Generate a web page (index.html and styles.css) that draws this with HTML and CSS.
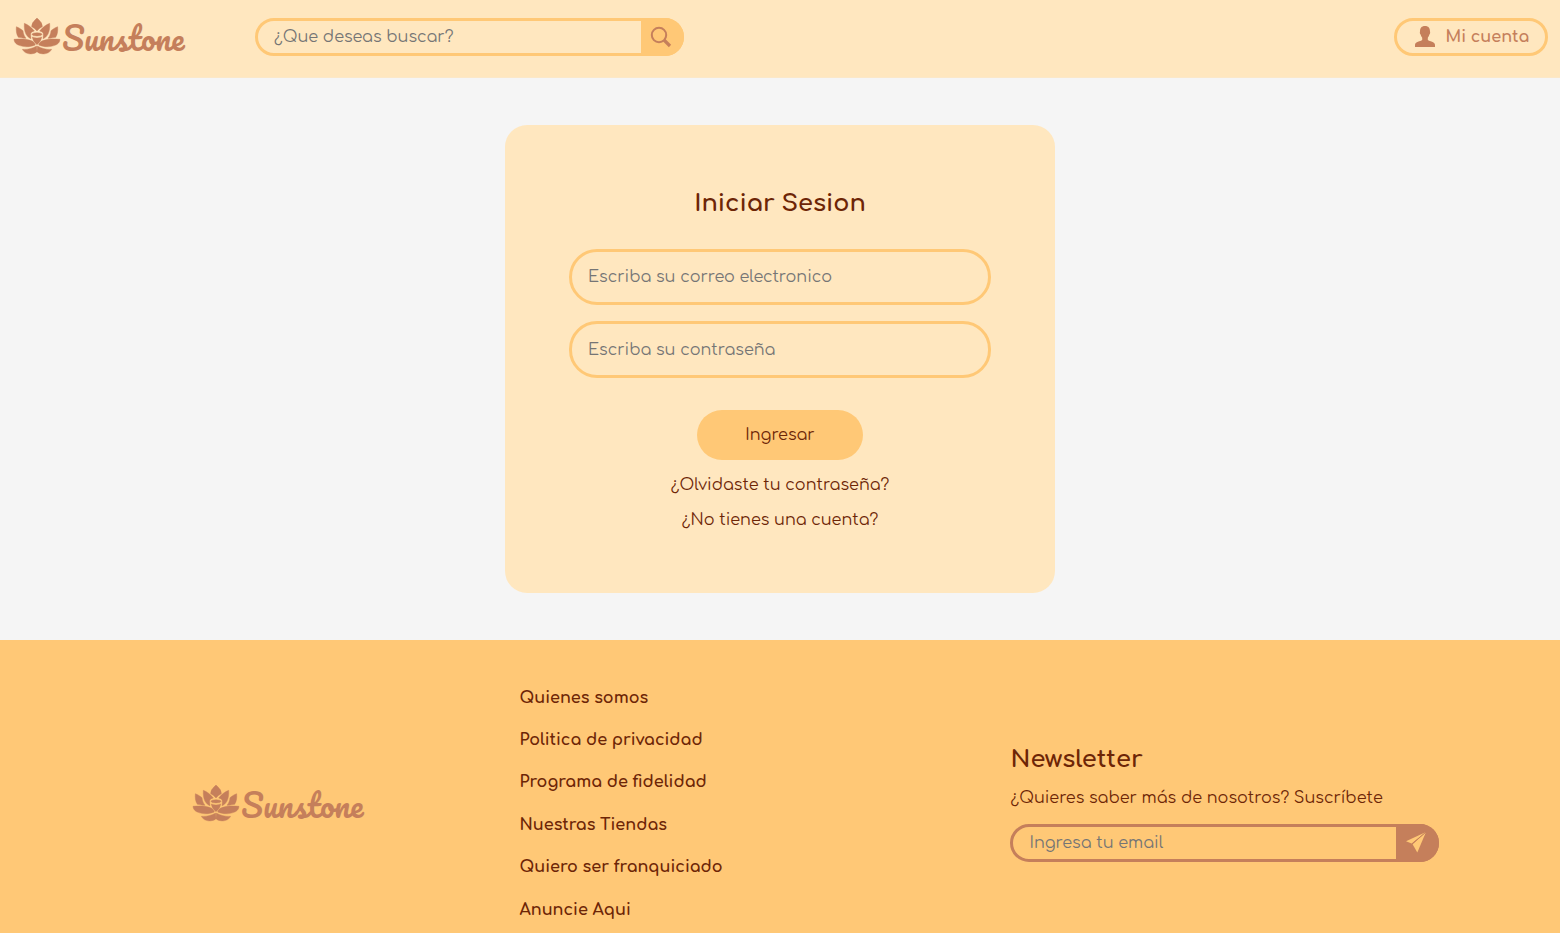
FILE: index.html
```html
<!DOCTYPE html>
<html lang="es">
<head>
<meta charset="utf-8">
<title>Sunstone</title>
<link rel="stylesheet" href="styles.css">
</head>
<body>
<svg class="defs" width="0" height="0">
  <symbol id="logo" viewBox="0 0 174 42" overflow="visible">
    <g class="lotus" transform="translate(-14 -15) scale(.33333)">
      <path d="M111 54Q94 68 95 80Q104 84 111 93Q118 84 127 80Q128 68 111 54Z"/>
      <g id="petals">
        <path d="M73 70C84 74 94 82 103 93C94 95 91 99 92 106L93 116C81 112 71 98 73 70Z"/>
        <path d="M49 80C57 83 63 87 69 92C70 102 73 108 78 115C68 115 61 113 55 112C49 103 48 92 49 80Z"/>
        <path d="M42 118C60 116 80 117 91 121C100 124 105 129 106 135C95 140 80 142 68 139C52 136 43 130 42 118Z"/>
        <path d="M67 148C84 149 97 145 110 138L111 155C102 164 76 166 67 148Z"/>
      </g>
      <use href="#petals" transform="translate(222 0) scale(-1 1)"/>
      <ellipse cx="111" cy="103" rx="15" ry="5"/>
      <path d="M97 111Q111 117 125 111Q124 124 111 134Q98 124 97 111Z"/>
    </g>
    <text class="logo-text" x="48" y="35.500">Sunstone</text>
  </symbol>
</svg>
<header class="header">
  <svg class="logo"><use href="#logo"/></svg>
  <form class="search">
    <input class="search-input" type="text" placeholder="¿Que deseas buscar?">
    <button class="search-btn" type="button" aria-label="Buscar">
      <svg width="22" height="22" viewBox="0 0 22 22" fill="none" stroke="#c57f5b"><circle cx="9" cy="9" r="7.200" stroke-width="2"/><path d="M14 14L20 20" stroke-width="3.200"/></svg>
    </button>
  </form>
  <a class="account"><svg width="20" height="21" viewBox="0 0 20 21" fill="#c57f5b"><path d="M10 0C6.500 0 5 2.200 5 5.500C4.600 6.500 5 8 5.600 8.600C6 10.300 6.700 11 7.200 11.700V14C5.500 15.500 0 15.500 0 19V21H20V19C20 15.500 14.500 15.500 12.800 14V11.700C13.300 11 14 10.300 14.400 8.600C15 8 15.400 6.500 15 5.500C15 2.200 13.500 0 10 0Z"/></svg><span>Mi cuenta</span></a>
</header>
<main class="main">
  <form class="card">
    <h1 class="title">Iniciar Sesion</h1>
    <input class="field" type="email" placeholder="Escriba su correo electronico">
    <input class="field" type="password" placeholder="Escriba su contraseña">
    <button class="submit" type="button">Ingresar</button>
    <a class="link">¿Olvidaste tu contraseña?</a>
    <a class="link">¿No tienes una cuenta?</a>
  </form>
</main>
<footer class="footer">
  <div class="footer-logo"><svg class="logo"><use href="#logo"/></svg></div>
  <nav class="footer-nav">
    <a>Quienes somos</a>
    <a>Politica de privacidad</a>
    <a>Programa de fidelidad</a>
    <a>Nuestras Tiendas</a>
    <a>Quiero ser franquiciado</a>
    <a>Anuncie Aqui</a>
  </nav>
  <section class="newsletter">
    <h2 class="news-title">Newsletter</h2>
    <p class="news-text">¿Quieres saber más de nosotros? Suscríbete</p>
    <form class="search news-form">
      <input class="search-input" type="text" placeholder="Ingresa tu email">
      <button class="search-btn" type="button" aria-label="Enviar">
        <svg width="20" height="21" viewBox="0 0 20 21" fill="#ffc876"><path d="M20 0L0 9.300L5.600 11.600Z"/><path d="M20 0L6.600 12.300L11.300 20.500Z"/><path d="M20 0L6 12" stroke="#c57f5b" stroke-width="1"/></svg>
      </button>
    </form>
  </section>
</footer>
</body>
</html>
```
FILE: styles.css
```css
* { box-sizing: border-box; }
body {
  margin: 0;
  height: 100vh;
  overflow: hidden;
  background: #f5f5f5;
  color: #6d2506;
  font: 16px/20px Comfortaa, Lato, sans-serif;
}
.defs { position: absolute; }
h1, h2, p { margin: 0; }
input, button { font: inherit; border: 0; background: none; padding: 0; outline: 0; }
input::placeholder { color: #757575; opacity: 1; }

.header {
  display: flex;
  height: 78px;
  padding: 18px 12px 22px 14px;
  background: #ffe7bf;
  border-bottom: 1px solid #fbe8c9;
}
.logo { display: block; width: 174px; height: 42px; margin-top: -3px; fill: #c57f5b; overflow: visible; }
.lotus { stroke: #c57f5b; stroke-width: 1.2; }
.logo-text { font: 400 32px Pacifico, Lato, sans-serif; }
.search {
  display: flex;
  width: 429px;
  height: 38px;
  margin-left: 67px;
  border: 3px solid #ffc876;
  border-radius: 19px;
}
.search-input { flex: 1; min-width: 0; padding-left: 16px; }
.search-btn {
  display: grid;
  place-items: center;
  width: 43px;
  margin: -3px -3px -3px 0;
  padding-right: 3px;
  border-radius: 0 19px 19px 0;
  background: #ffc876;
}
.account {
  display: flex;
  align-items: center;
  gap: 10.5px;
  width: 154px;
  height: 38px;
  margin-left: auto;
  padding-left: 18px;
  border: 3px solid #ffc876;
  border-radius: 19px;
  color: #c57f5b;
  font-weight: 700;
  white-space: nowrap;
}
.account svg { margin-top: -1px; }

.main { display: flex; justify-content: center; height: 562px; padding-top: 47px; }
.card {
  display: flex;
  flex-direction: column;
  align-items: center;
  width: 550px;
  height: 468px;
  padding: 63px 64px 0;
  border-radius: 22px;
  background: #ffe7bf;
}
.title { margin-bottom: 29px; font-size: 24px; line-height: 32px; font-weight: 700; }
.field {
  width: 422px;
  height: 56px;
  margin-bottom: 16px;
  padding-left: 16px;
  border: 3px solid #ffc876;
  border-radius: 28px;
}
.field + .field { height: 57px; padding-top: 1px; }
.submit {
  width: 166px;
  height: 50px;
  margin: 16px 0 15px;
  border-radius: 25px;
  background: #ffc876;
  color: #6d2506;
}
.link { margin-bottom: 15px; }

.footer {
  display: grid;
  grid-template-columns: 519.5px 490.5px 550px;
  align-items: center;
  height: 326px;
  background: #ffc876;
}
.footer-logo { padding: 2px 0 0 193px; }
.footer-nav { display: flex; flex-direction: column; gap: 22.4px; padding-top: 1.2px; font-weight: 700; }
.news-title { margin-bottom: 13px; padding-left: .5px; font-size: 24px; line-height: 30px; font-weight: 700; }
.news-text { margin-bottom: 16px; padding-left: .4px; }
.news-form { margin-left: 0; border-color: #c57f5b; }
.news-form .search-input { padding-left: 16.5px; }
.news-form .search-btn { background: #c57f5b; }
```
